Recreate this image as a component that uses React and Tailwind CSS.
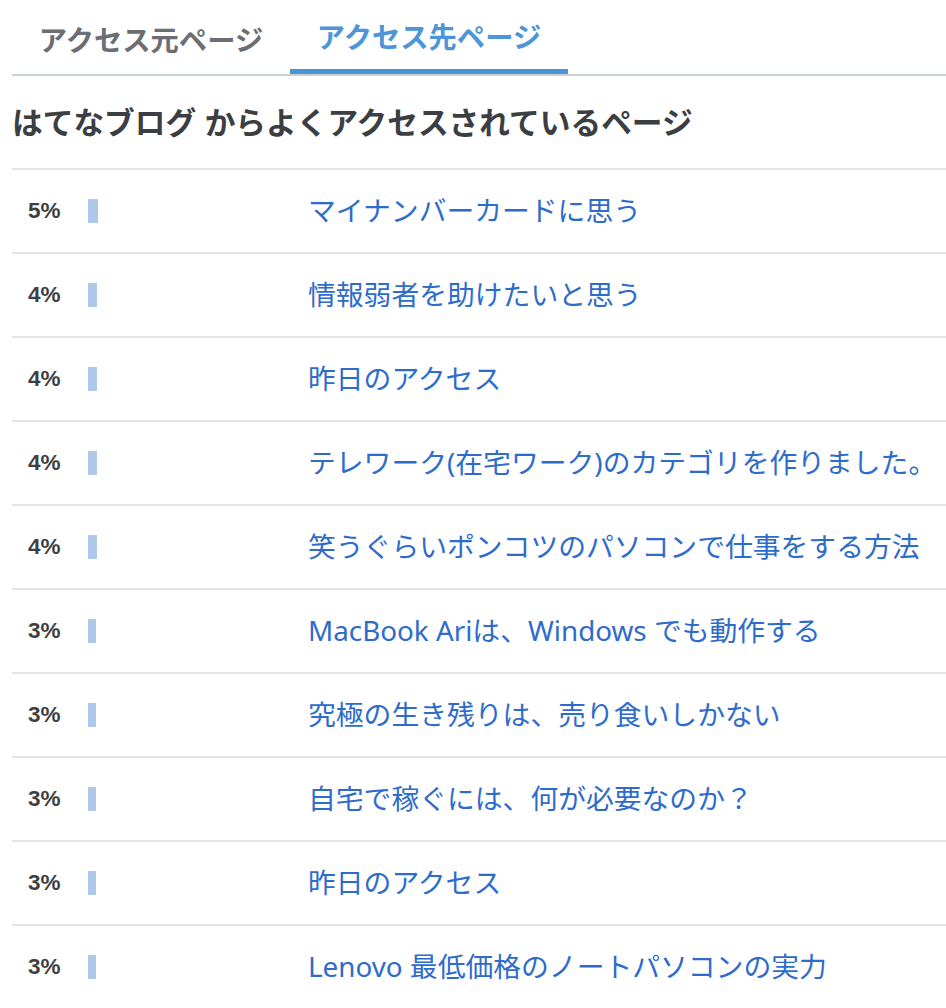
const FONT = 'font-["Liberation_Sans","Noto_Sans_CJK_JP",sans-serif]';

const rows = [
  { pct: 5, title: 'マイナンバーカードに思う' },
  { pct: 4, title: '情報弱者を助けたいと思う' },
  { pct: 4, title: '昨日のアクセス' },
  { pct: 4, title: 'テレワーク(在宅ワーク)のカテゴリを作りました。' },
  { pct: 4, title: '笑うぐらいポンコツのパソコンで仕事をする方法' },
  { pct: 3, title: 'MacBook Ariは、Windows でも動作する' },
  { pct: 3, title: '究極の生き残りは、売り食いしかない' },
  { pct: 3, title: '自宅で稼ぐには、何が必要なのか？' },
  { pct: 3, title: '昨日のアクセス' },
  { pct: 3, title: 'Lenovo 最低価格のノートパソコンの実力' },
];

export default function App() {
  return (
    <div className={`${FONT} bg-white pl-[12px] w-[946px] overflow-hidden`}>
      <div className="flex h-[76px] border-b-2 border-[#c9d1d7]">
        <div className="w-[278px] flex items-center justify-center pt-[8px] text-[28.3px] font-bold text-[#6b6e72] whitespace-nowrap">
          アクセス元ページ
        </div>
        <div className="w-[278px] flex items-center justify-center pt-[8px] text-[28.3px] font-bold text-[#4b95d8] border-b-[5px] border-[#4a94d8] whitespace-nowrap">
          アクセス先ページ
        </div>
      </div>

      <h2 className="h-[92px] flex items-center pt-[4px] text-[30.7px] font-bold text-[#3b3e42] whitespace-nowrap">
        はてなブログ からよくアクセスされているページ
      </h2>

      <div>
        {rows.map((r, i) => (
          <div key={i} className="flex items-center h-[84px] border-t-2 border-[#e2e6ea]">
            <div className="w-[76px] flex-none pl-[16px] text-[22.5px] font-bold text-[#3d3f42]">{r.pct}%</div>
            <div className="w-[220px] flex-none">
              <div className="h-[24px] bg-[#adc8e8]" style={{ width: r.pct + 5 }} />
            </div>
            <a className='font-["Noto_Sans","Noto_Sans_CJK_JP",sans-serif] text-[27.8px] text-[#2e6ccc] whitespace-nowrap' href="#">{r.title}</a>
          </div>
        ))}
      </div>
    </div>
  );
}
